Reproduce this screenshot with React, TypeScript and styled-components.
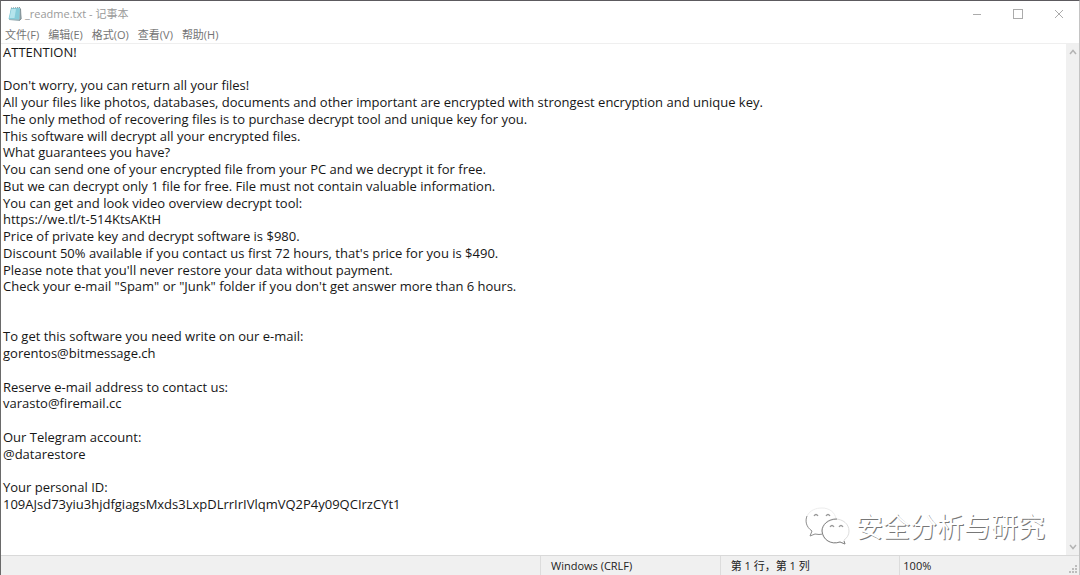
import React from 'react';
import styled, { createGlobalStyle } from 'styled-components';

const Global = createGlobalStyle`
  *, *::before, *::after { box-sizing: border-box; }
  body { margin: 0; background: #fff; }
`;

const uiFont = `'Open Sans', 'Noto Sans CJK SC', sans-serif`;

const Window = styled.main`
  display: flex;
  flex-direction: column;
  min-height: 100vh;
  border-top: 1px solid #5c5a5e;
  border-left: 1px solid #6a6a6a;
  border-right: 1px solid #c4c4c4;
  background: #fff;
  font-family: ${uiFont};
  font-size: 11px;
  color: #222;
`;

const TitleBar = styled.header`
  display: flex;
  align-items: center;
  height: 25px;
  padding-left: 6px;
`;

const Title = styled.h1`
  flex: 1;
  margin: 0;
  padding-left: 2px;
  font-size: 11px;
  line-height: 16px;
  font-weight: 400;
  color: #9a9a9a;
`;

const CaptionButton = styled.button`
  display: grid;
  place-items: center;
  width: 41px;
  height: 25px;
  padding: 0;
  border: 0;
  background: none;
  color: #ababab;
`;

const MenuBar = styled.nav`
  display: flex;
  gap: 9px;
  height: 18px;
  padding: 1px 0 0 4px;
  border-bottom: 1px solid #efefef;
`;

const MenuButton = styled.button`
  padding: 0;
  border: 0;
  background: none;
  color: #747474;
  font-family: ${uiFont};
  font-size: 11px;
  line-height: 16px;
`;

const Editor = styled.section`
  position: relative;
  display: flex;
  flex: 1;
`;

const Note = styled.textarea`
  flex: 1;
  min-width: 0;
  padding: 0 2px;
  border: 0;
  outline: 0;
  resize: none;
  overflow: hidden;
  background: #fff;
  color: #161616;
  font-family: ${uiFont};
  font-size: 13px;
  line-height: 1.288;
`;

const ScrollTrack = styled.div`
  display: flex;
  flex-direction: column;
  justify-content: space-between;
  width: 13px;
  background: #f0f0f0;
`;

const ScrollButton = styled.button`
  display: grid;
  place-items: center;
  height: 16px;
  padding: 0;
  border: 0;
  background: none;
  color: #b4b4b4;
`;

const Watermark = styled.div`
  position: absolute;
  right: 34px;
  bottom: 9px;
  display: flex;
  align-items: center;
  gap: 6px;
  pointer-events: none;
  color: #fff;
  font-family: 'Noto Sans CJK SC', sans-serif;
  font-size: 27px;
  line-height: 40px;
  text-shadow: 1px 1px 0 #777;
`;

const StatusBar = styled.footer`
  display: grid;
  grid-template-columns: 3fr 1fr 1fr 1fr;
  height: 20px;
  border-top: 1px solid #d9d9d9;
  background: #f0f0f0;
`;

const StatusCell = styled.div`
  display: flex;
  align-items: center;
  justify-content: space-between;
  padding-left: 10px;
  border-left: 1px solid #dcdcdc;
  line-height: 16px;

  &:first-child { border-left: 0; }
  &:last-child { padding-left: 3px; }
`;

const Grip = styled.svg`
  align-self: flex-end;
`;

const menus = ['文件(F)', '编辑(E)', '格式(O)', '查看(V)', '帮助(H)'];

const note = `ATTENTION!

Don't worry, you can return all your files!
All your files like photos, databases, documents and other important are encrypted with strongest encryption and unique key.
The only method of recovering files is to purchase decrypt tool and unique key for you.
This software will decrypt all your encrypted files.
What guarantees you have?
You can send one of your encrypted file from your PC and we decrypt it for free.
But we can decrypt only 1 file for free. File must not contain valuable information.
You can get and look video overview decrypt tool:
https://we.tl/t-514KtsAKtH
Price of private key and decrypt software is $980.
Discount 50% available if you contact us first 72 hours, that's price for you is $490.
Please note that you'll never restore your data without payment.
Check your e-mail "Spam" or "Junk" folder if you don't get answer more than 6 hours.


To get this software you need write on our e-mail:
gorentos@bitmessage.ch

Reserve e-mail address to contact us:
varasto@firemail.cc

Our Telegram account:
@datarestore

Your personal ID:
109AJsd73yiu3hjdfgiagsMxds3LxpDLrrIrIVlqmVQ2P4y09QCIrzCYt1`;

const NotepadIcon = () => (
  <svg width="16" height="16" viewBox="0 0 16 16" aria-hidden="true">
    <path d="M4 2.5 13 1.5 14.5 13 12 15 2 14Z" fill="#9fb2b8" />
    <path d="M4 2 13 2 12 13.5 1.5 13Z" fill="#86ccd9" />
    <path d="M4.5 3 9 3 7.5 12 2.5 12Z" fill="#b5e4ec" />
    <path d="M4 2 13 1.5" stroke="#8b9ba0" strokeDasharray="1 1" />
    <path d="M13.5 2.5 14 13 12 14.5" fill="none" stroke="#7d8c91" />
  </svg>
);

const Chevron = ({ down = false }: { down?: boolean }) => (
  <svg width="8" height="6" viewBox="0 0 8 6" fill="none" stroke="currentColor" strokeWidth="1.5" aria-hidden="true">
    <path d={down ? 'M1 1 4 4.5 7 1' : 'M1 5 4 1.5 7 5'} />
  </svg>
);

const ChatLogo = () => (
  <svg width="45" height="39" viewBox="0 0 45 39" fill="none" aria-hidden="true">
    <path d="M2 9C5 3 11 1 17 1 24 1 30 5 31 12" stroke="#ededed" />
    <path d="M2 9C0 14 1 20 7 24L5 29 10 27Q14 28 18 27" stroke="#8d8d8d" />
    <path d="M17 24C17 17 23 12 30 12 38 12 44 17 44 24 44 28 42 31 39 33L40 37 35 35C26 38 17 33 17 24Z" fill="#fff" stroke="#dedede" />
    <path d="M32 12C23 12 17 18 17 24 18 33 26 38 35 35L40 37 39 34" stroke="#848484" />
    <path d="M9 9Q11 6 13 9M21 9Q23 6 25 9M25 20Q27 17 29 20M34 20Q36 17 38 20" stroke="#999" strokeWidth="1.3" />
  </svg>
);

export default function App() {
  return (
    <>
      <Global />
      <Window>
        <TitleBar>
          <NotepadIcon />
          <Title>_readme.txt - 记事本</Title>
          <CaptionButton aria-label="最小化">
            <svg width="10" height="10" stroke="currentColor"><path d="M1 5.5H9" /></svg>
          </CaptionButton>
          <CaptionButton aria-label="最大化">
            <svg width="10" height="10" stroke="currentColor" fill="none"><rect x="0.5" y="0.5" width="9" height="9" /></svg>
          </CaptionButton>
          <CaptionButton aria-label="关闭">
            <svg width="10" height="10" stroke="currentColor"><path d="M1 1 9 9M9 1 1 9" /></svg>
          </CaptionButton>
        </TitleBar>
        <MenuBar>
          {menus.map((m) => <MenuButton key={m}>{m}</MenuButton>)}
        </MenuBar>
        <Editor>
          <Note aria-label="_readme.txt" spellCheck={false} defaultValue={note} rows={28} />
          <ScrollTrack>
            <ScrollButton aria-label="向上滚动"><Chevron /></ScrollButton>
            <ScrollButton aria-label="向下滚动"><Chevron down /></ScrollButton>
          </ScrollTrack>
          <Watermark>
            <ChatLogo />
            <span>安全分析与研究</span>
          </Watermark>
        </Editor>
        <StatusBar>
          <StatusCell />
          <StatusCell>Windows (CRLF)</StatusCell>
          <StatusCell>第 1 行，第 1 列</StatusCell>
          <StatusCell>
            100%
            <Grip width="11" height="11" fill="#bdbdbd" aria-hidden="true">
              <path d="M7 1h2v2h-2zM4 4h2v2h-2zM7 4h2v2h-2zM1 7h2v2h-2zM4 7h2v2h-2zM7 7h2v2h-2z" />
            </Grip>
          </StatusCell>
        </StatusBar>
      </Window>
    </>
  );
}
